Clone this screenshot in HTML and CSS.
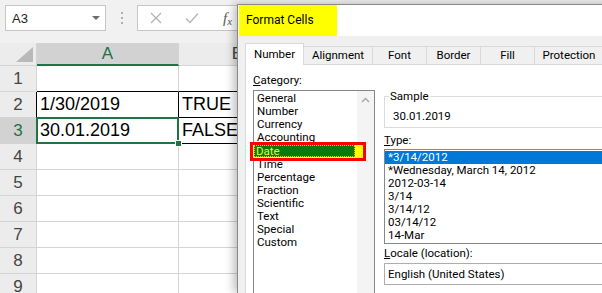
FILE: index.html
```html
<!DOCTYPE html>
<html lang="en">

<head>
    <meta charset="UTF-8">
    <meta name="viewport" content="width=device-width, initial-scale=1.0">
    <title>Format Cells - Date</title>
    <link rel="stylesheet" href="styles.css">
</head>

<body>

    <!-- spreadsheet behind the dialog -->
    <div class="excel">
        <div class="toolbar">
            <div class="namebox">A3 <span class="drop"></span></div>
            <div class="grip"><i></i><i></i><i></i></div>
            <div class="formula">
                <svg class="cancel" width="12" height="12" viewBox="0 0 12 12">
                    <path d="M1 1 L11 11 M11 1 L1 11" stroke="#b4b4b4" stroke-width="1.3" fill="none" />
                </svg>
                <svg class="enter" width="14" height="12" viewBox="0 0 14 12">
                    <path d="M1 6.5 L5 10.5 L13 1.5" stroke="#b4b4b4" stroke-width="1.3" fill="none" />
                </svg>
                <span class="fx"><i>f</i><i class="fx-x">x</i></span>
            </div>
        </div>

        <div class="sheet">
            <div class="corner">
                <svg width="17" height="15" viewBox="0 0 17 15"><polygon points="0,15 17,15 17,0" fill="#b9b9b9" /></svg>
            </div>
            <div class="colhead active">A</div>
            <div class="colhead">B</div>
            <div class="colhead"></div>

            <div class="rowhead">1</div>
            <div class="cell bb"></div>
            <div class="cell bb"></div>
            <div class="cell"></div>

            <div class="rowhead br">2</div>
            <div class="cell bb brk">1/30/2019</div>
            <div class="cell bb">TRUE</div>
            <div class="cell"></div>

            <div class="rowhead active br">3</div>
            <div class="cell bb brk selected">30.01.2019<span class="handle"></span></div>
            <div class="cell bb">FALSE</div>
            <div class="cell"></div>

            <div class="rowhead">4</div>
            <div class="cell"></div>
            <div class="cell"></div>
            <div class="cell"></div>

            <div class="rowhead">5</div>
            <div class="cell"></div>
            <div class="cell"></div>
            <div class="cell"></div>

            <div class="rowhead">6</div>
            <div class="cell"></div>
            <div class="cell"></div>
            <div class="cell"></div>

            <div class="rowhead">7</div>
            <div class="cell"></div>
            <div class="cell"></div>
            <div class="cell"></div>

            <div class="rowhead">8</div>
            <div class="cell"></div>
            <div class="cell"></div>
            <div class="cell"></div>

            <div class="rowhead">9</div>
            <div class="cell"></div>
            <div class="cell"></div>
            <div class="cell"></div>
        </div>
    </div>

    <!-- Format Cells dialog -->
    <div class="dialog">
        <div class="titlebar">
            <div class="title">Format Cells</div>
        </div>

        <div class="tabs">
            <div class="tab active">Number</div>
            <div class="tab wide">Alignment</div>
            <div class="tab">Font</div>
            <div class="tab">Border</div>
            <div class="tab">Fill</div>
            <div class="tab wide">Protection</div>
        </div>

        <div class="panel">
            <div class="left">
                <div class="label"><u>C</u>ategory:</div>
                <div class="catlist">
                    <div class="items">
                        <div class="item">General</div>
                        <div class="item">Number</div>
                        <div class="item">Currency</div>
                        <div class="item">Accounting</div>
                        <div class="item date"><span class="hl">Date</span></div>
                        <div class="item">Time</div>
                        <div class="item">Percentage</div>
                        <div class="item">Fraction</div>
                        <div class="item">Scientific</div>
                        <div class="item">Text</div>
                        <div class="item">Special</div>
                        <div class="item">Custom</div>
                    </div>
                    <div class="scrollbar">
                        <svg width="9" height="6" viewBox="0 0 9 6">
                            <path d="M1 5 L4.5 1.5 L8 5" stroke="#a6a6a6" stroke-width="1.4" fill="none" />
                        </svg>
                    </div>
                </div>
            </div>

            <div class="right">
                <fieldset class="sample">
                    <legend>Sample</legend>
                    <div class="sample-value">30.01.2019</div>
                </fieldset>

                <div class="label type-label"><u>T</u>ype:</div>
                <div class="typelist">
                    <div class="item picked">*3/14/2012</div>
                    <div class="item">*Wednesday, March 14, 2012</div>
                    <div class="item">2012-03-14</div>
                    <div class="item">3/14</div>
                    <div class="item">3/14/12</div>
                    <div class="item">03/14/12</div>
                    <div class="item">14-Mar</div>
                </div>

                <div class="label locale-label"><u>L</u>ocale (location):</div>
                <div class="combo">English (United States)</div>
            </div>
        </div>
    </div>

</body>

</html>
```

FILE: styles.css
```css
body {
    margin: 0;
    width: 602px;
    height: 293px;
    overflow: hidden;
    position: relative;
    background: #fff;
    font-family: "Liberation Sans", Arial, sans-serif;
}

/* ---------- spreadsheet ---------- */

.toolbar {
    display: flex;
    height: 43px;
    box-sizing: border-box;
    padding: 5px 0 0 5px;
    background: #f1f1f1;
}

.namebox {
    width: 101px;
    height: 26px;
    box-sizing: border-box;
    border: 1px solid #c6c6c6;
    background: #fff;
    font-size: 13px;
    color: #222;
    display: flex;
    align-items: center;
    padding-left: 6px;
}

.drop {
    margin-left: auto;
    margin-right: 5px;
    border-left: 4px solid transparent;
    border-right: 4px solid transparent;
    border-top: 4px solid #6d6d6d;
}

.grip {
    width: 31px;
    height: 26px;
    display: flex;
    flex-direction: column;
    align-items: center;
    justify-content: center;
    gap: 3px;
}

.grip i {
    width: 2px;
    height: 2px;
    background: #b0b0b0;
}

.formula {
    flex: 1;
    height: 26px;
    box-sizing: border-box;
    border: 1px solid #c6c6c6;
    border-right: none;
    background: #fff;
    display: flex;
    align-items: center;
}

.cancel {
    margin-left: 12px;
}

.enter {
    margin-left: 23px;
}

.fx {
    margin-left: 24px;
    font-family: "Liberation Serif", serif;
    font-size: 15px;
    color: #5a5a5a;
}

.fx-x {
    font-size: 11px;
    position: relative;
    top: 2px;
}

.sheet {
    display: grid;
    grid-template-columns: 37px 142px 118px 1fr;
    grid-template-rows: 23px;
    grid-auto-rows: 26px;
}

.sheet>div {
    box-sizing: border-box;
    border-right: 1px solid #d4d4d4;
    border-bottom: 1px solid #d4d4d4;
    display: flex;
    align-items: center;
}

.corner {
    background: #ececec;
    justify-content: flex-end;
    align-items: flex-end !important;
    padding: 0 3px 3px 0;
}

.colhead,
.rowhead {
    background: #ececec;
    justify-content: center;
    font-size: 17px;
    color: #444;
}

.colhead.active {
    background: #d2d2d2;
    color: #217346;
    border-bottom: 2px solid #217346;
}

.rowhead.active {
    background: #d2d2d2;
    color: #217346;
}

.cell {
    font-size: 18px;
    padding-left: 3px;
    color: #000;
    white-space: nowrap;
}

.sheet>.bb {
    border-bottom-color: #000;
}

.sheet>.brk,
.sheet>.br {
    border-right-color: #000;
}

.selected {
    position: relative;
}

.selected::after {
    content: "";
    position: absolute;
    left: -1px;
    top: -1px;
    right: -1px;
    bottom: -1px;
    border: 2px solid #217346;
}

.handle {
    position: absolute;
    right: -4px;
    bottom: -4px;
    width: 5px;
    height: 5px;
    background: #217346;
    border: 1px solid #fff;
    z-index: 1;
}

/* ---------- dialog ---------- */

.dialog {
    position: absolute;
    left: 237px;
    top: 4px;
    width: 380px;
    height: 289px;
    overflow: hidden;
    box-sizing: border-box;
    border-left: 1px solid #8a8a8a;
    border-top: 1px solid #8a8a8a;
    background: #f0f0f0;
    box-shadow: -3px 0 9px rgba(0, 0, 0, 0.28);
    font-family: Roboto, "Noto Sans", sans-serif;
    font-size: 11.5px;
    line-height: 13px;
    color: #000;
}

.titlebar {
    height: 31px;
    background: #fff;
    display: flex;
}

.title {
    width: 98px;
    margin-left: 1px;
    box-sizing: border-box;
    padding-left: 7px;
    background: #ffff00;
    font-size: 12px;
    display: flex;
    align-items: center;
}

.tabs {
    display: flex;
    align-items: flex-end;
    padding: 7px 0 0 7px;
}

.tab {
    width: 54px;
    height: 18px;
    box-sizing: border-box;
    border-top: 1px solid #d9d9d9;
    border-right: 1px solid #d9d9d9;
    display: flex;
    align-items: center;
    justify-content: center;
}

.tab.wide {
    width: 69px;
}

.tab.active {
    width: 59px;
    height: 22px;
    margin-bottom: -1px;
    border-left: 1px solid #d9d9d9;
    background: #fff;
    position: relative;
    z-index: 1;
}

.panel {
    margin-left: 7px;
    height: 240px;
    box-sizing: border-box;
    border: 1px solid #d9d9d9;
    border-right: none;
    background: #fff;
    padding: 9px 0 0 7px;
    display: grid;
    grid-template-columns: 122px 1fr;
    column-gap: 9px;
    align-content: start;
}

.catlist {
    margin-top: 3px;
    height: 210px;
    border: 1px solid #828790;
    display: flex;
}

.items {
    flex: 1;
    padding-top: 1px;
}

.item {
    height: 13px;
    padding-left: 3px;
    white-space: nowrap;
}

.item.date {
    margin: 0 -6px 0 -1px;
    padding: 0;
    background: #ffff00;
    outline: 3px solid #ff0000;
    position: relative;
    z-index: 1;
}

.hl {
    display: block;
    height: 12px;
    box-sizing: border-box;
    margin: 1px 8px 0 1px;
    padding-left: 1px;
    line-height: 10px;
    background: #0a7a0a;
    border: 1px dotted #d6d600;
    color: #e4f53a;
}

.scrollbar {
    width: 17px;
    background: #f4f4f4;
    display: flex;
    justify-content: center;
    padding-top: 6px;
    box-sizing: border-box;
}

.sample {
    margin: 16px 0 0;
    padding: 7px 0 4px 4px;
    border: 1px solid #dcdcdc;
    border-right: none;
    min-width: 0;
}

.sample legend {
    padding: 0 1px;
    line-height: 13px;
}

.sample-value {
    padding-left: 4px;
}

.type-label {
    margin-top: 6px;
}

.typelist {
    margin-top: 2px;
    border: 1px solid #828790;
    border-right: none;
    padding: 1px 0;
}

.typelist .picked {
    background: #0078d7;
    color: #fff;
}

.locale-label {
    margin-top: 3px;
}

.combo {
    margin-top: 3px;
    height: 22px;
    box-sizing: border-box;
    border: 1px solid #adadad;
    border-right: none;
    padding-left: 3px;
    display: flex;
    align-items: center;
}
```
